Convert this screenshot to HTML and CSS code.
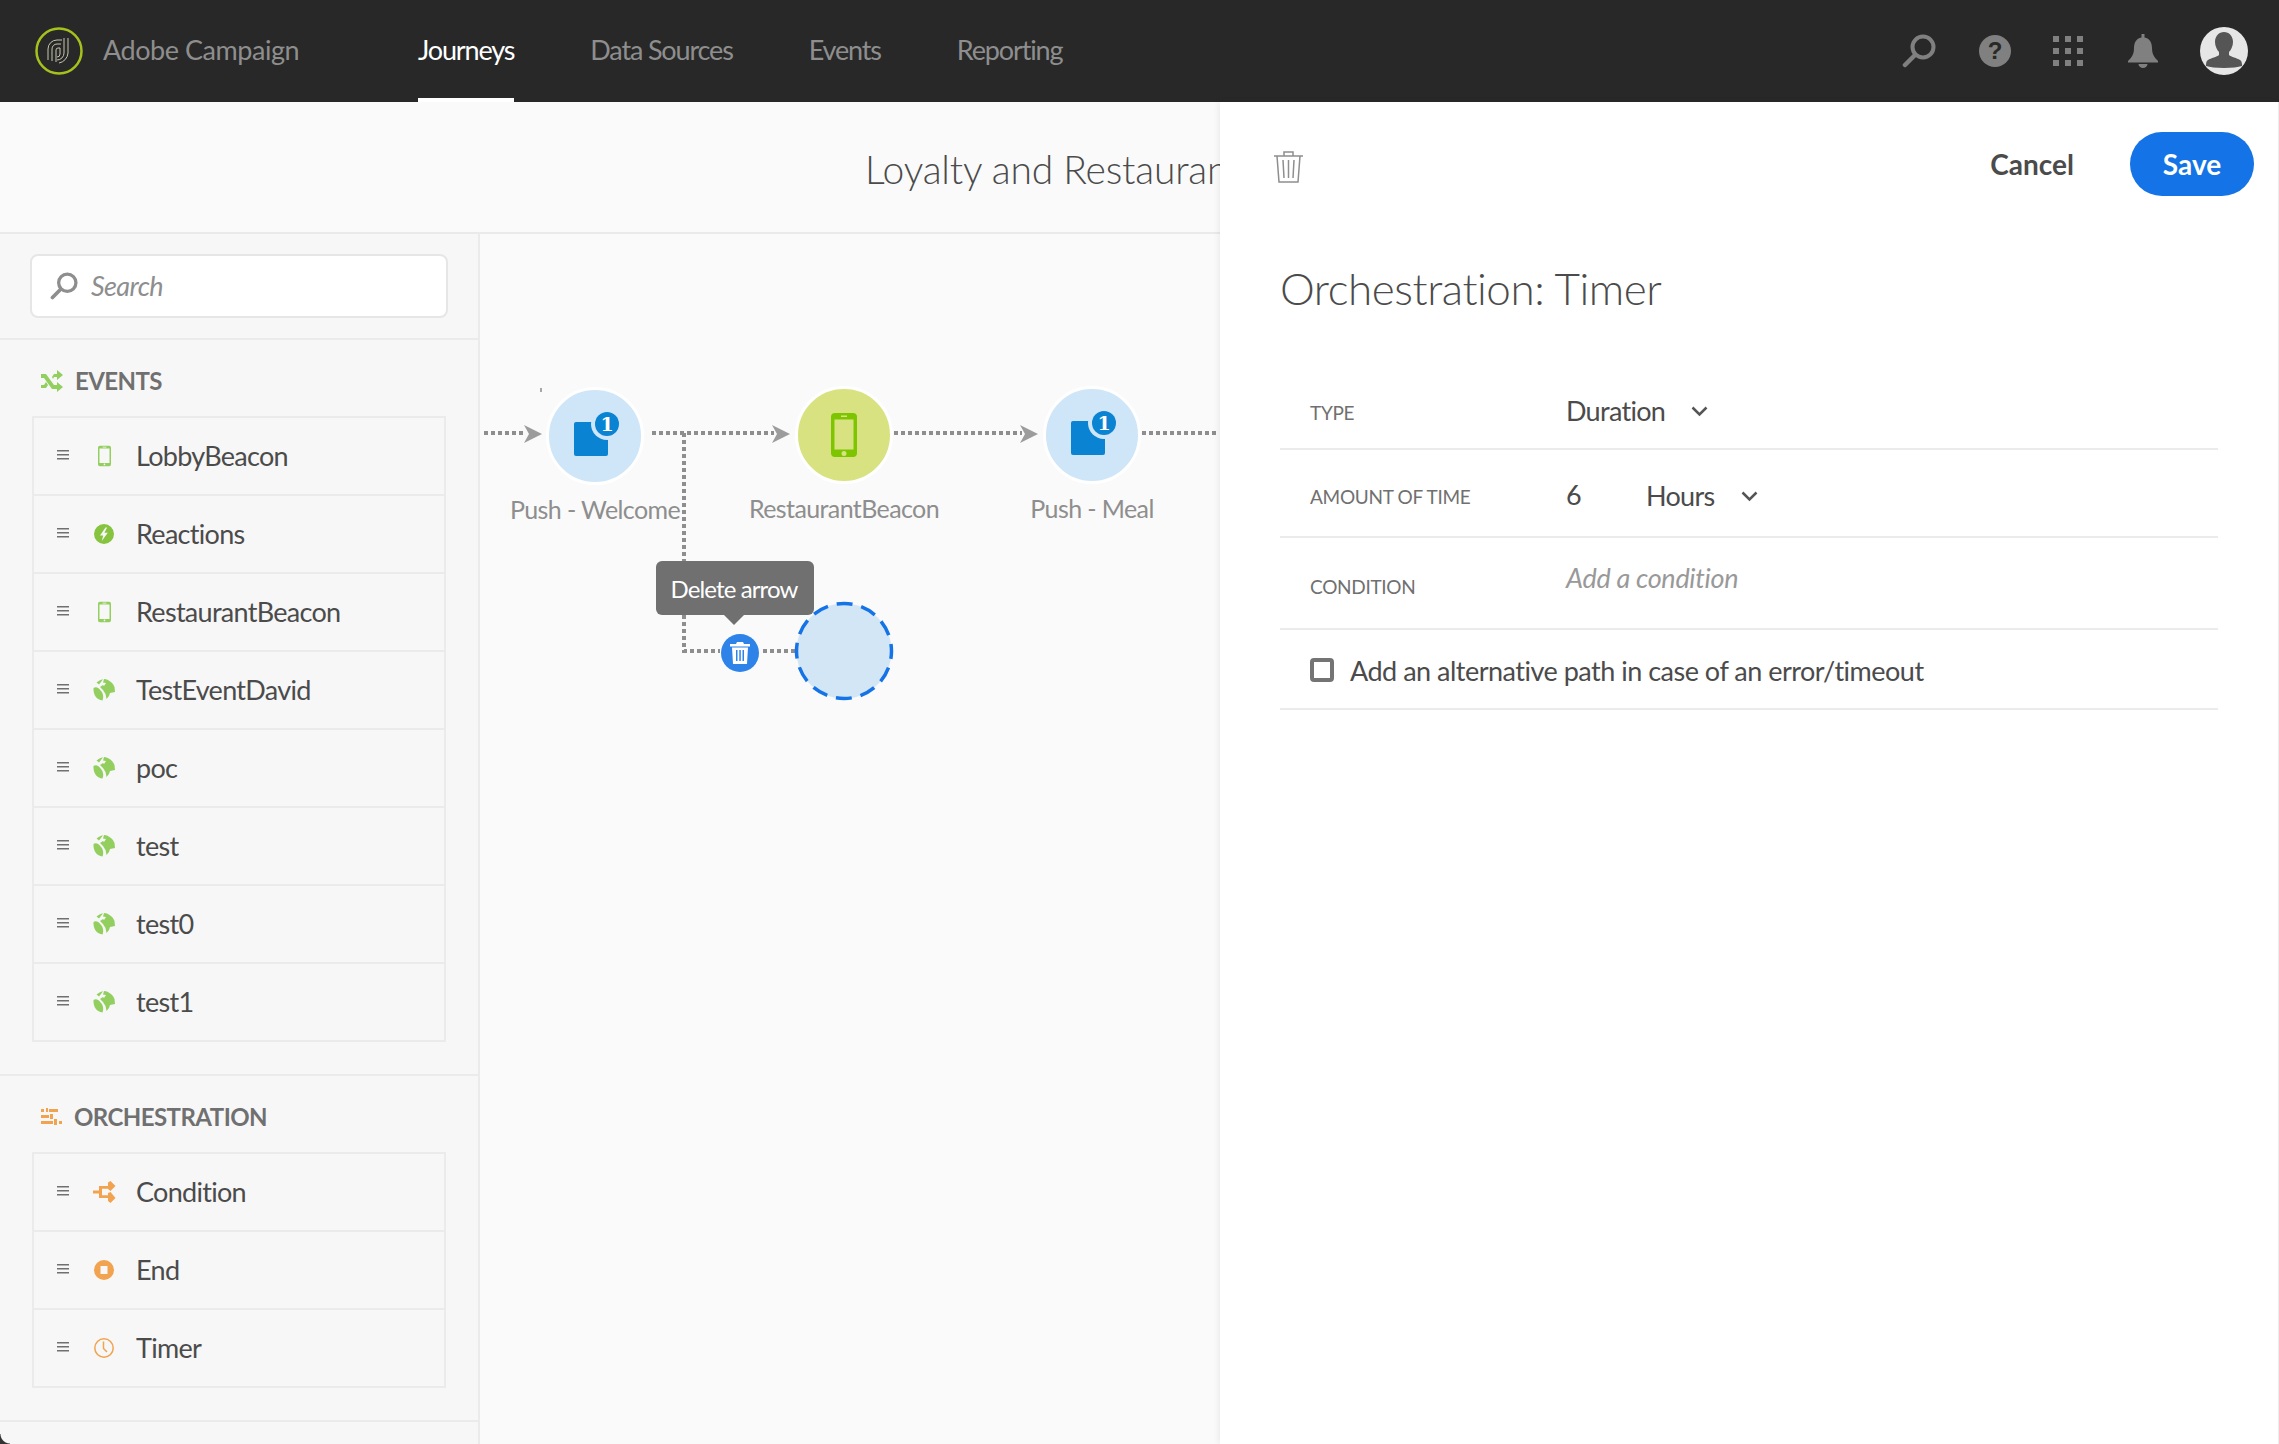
FILE: index.html
```html
<!DOCTYPE html>
<html lang="en">
<head>
<meta charset="utf-8">
<title>Adobe Campaign</title>
<link rel="stylesheet" href="styles.css">
</head>
<body>
<svg class="defs" width="0" height="0" aria-hidden="true">
  <symbol id="i-phone" viewBox="0 0 14 22"><path fill="currentColor" fill-rule="evenodd" d="M2 0h10a2 2 0 0 1 2 2v18a2 2 0 0 1-2 2H2a2 2 0 0 1-2-2V2a2 2 0 0 1 2-2zM1.600 3v15.500h10.800V3zM5 1v.8h4V1zM7 19.200a.9.9 0 1 0 0 1.800.9.9 0 0 0 0-1.800z"/></symbol>
  <symbol id="i-bolt" viewBox="0 0 20 20"><path fill="currentColor" fill-rule="evenodd" d="M10 0a10 10 0 1 1 0 20 10 10 0 0 1 0-20zM11.500 3.500 6 11.500h3.200L7.800 17l6-8.300h-3.400l2.700-5.200z"/></symbol>
  <symbol id="i-globe" viewBox="0 0 22 22"><path fill="currentColor" d="M.5 9C3 7 6 9 8 12c2 2 3 6 1.500 9.500C4 21 0 16 .5 9zM3.500 3.500C5.500 2 7.500.8 10 .2L8 3 6 5.500zM11 .1c5 .4 9 4 10.500 8L22 13l-5 1-1 3-2.500 3-1-5L10 11 7 8l3-2 1 1 2-3-3-.5z"/></symbol>
  <symbol id="i-handle" viewBox="0 0 12 10"><path fill="#707070" d="M0 0h12v1.600H0zM0 4h12v1.600H0zM0 8h12v1.600H0z"/></symbol>
</svg>

<header class="topbar">
  <svg class="logo" viewBox="0 0 48 48" width="48" height="48">
    <circle cx="24" cy="24" r="22.500" fill="none" stroke="#a4c11e" stroke-width="2.500"/>
    <g fill="none" stroke="#c6c6ac" stroke-width="1">
      <path d="M13 33V22a9 9 0 0 1 9-9h5"/>
      <path d="M17 34V22a5 5 0 0 1 5-5h4"/>
      <path d="M21 35V23a2 2 0 0 1 2-2h2v6a3 3 0 0 1-3 3"/>
      <path d="M29 11v15a7 7 0 0 1-7 7"/>
      <path d="M33 11v15a11 11 0 0 1-9 10"/>
    </g>
  </svg>
  <span class="brand">Adobe Campaign</span>
  <nav class="nav">
    <a class="nav-item is-active">Journeys</a>
    <a class="nav-item">Data Sources</a>
    <a class="nav-item">Events</a>
    <a class="nav-item">Reporting</a>
  </nav>
  <div class="top-icons">
    <svg class="ti-search" width="34" height="34" viewBox="0 0 34 34"><circle cx="21" cy="13" r="10.500" fill="none" stroke="#808080" stroke-width="4"/><path d="M13 21 3 31" stroke="#808080" stroke-width="4.500" stroke-linecap="round"/></svg>
    <svg class="ti-help" width="32" height="32" viewBox="0 0 32 32"><circle cx="16" cy="16" r="16" fill="#808080"/><text x="16" y="24" class="help-q">?</text></svg>
    <svg class="ti-grid" width="30" height="30" viewBox="0 0 30 30"><path fill="#808080" d="M0 0h6v6H0zM12 0h6v6h-6zM24 0h6v6h-6zM0 12h6v6H0zM12 12h6v6h-6zM24 12h6v6h-6zM0 24h6v6H0zM12 24h6v6h-6zM24 24h6v6h-6z"/></svg>
    <svg class="ti-bell" width="30" height="34" viewBox="0 0 30 34"><path fill="#808080" d="M13.500 0h3v3.500C22 4.500 24 9 24 14c0 6 2 9 6 13v1.500H0V27c4-4 6-7 6-13 0-5 2-9.500 7.500-10.500zM10.500 30h9a4.500 4 0 0 1-9 0z"/></svg>
    <svg class="ti-avatar" width="48" height="48" viewBox="0 0 48 48"><circle cx="24" cy="24" r="24" fill="#e6e6e6"/><path fill="#555" d="M24 5c5 0 9 4 9 10 0 4-2 8-4 10v3c2 2 8 3 11 5 2 1 2 4 2 6-4 1-10 2-18 2s-14-1-18-2c0-2 0-5 2-6 3-2 9-3 11-5v-3c-2-2-4-6-4-10 0-6 4-10 9-10z"/></svg>
  </div>
</header>

<main class="workspace">
  <section class="journey">
    <div class="journey-title"><h1>Loyalty and Restaurant Journey</h1></div>
    <div class="journey-body">
      <aside class="sidebar">
        <div class="search-wrap">
          <div class="search">
            <svg width="28" height="28" viewBox="0 0 34 34"><circle cx="21" cy="13" r="10.500" fill="none" stroke="#8e8e8e" stroke-width="4"/><path d="M13 21 3 31" stroke="#8e8e8e" stroke-width="4.500" stroke-linecap="round"/></svg>
            <span class="search-text">Search</span>
          </div>
        </div>

        <section class="group">
          <h2 class="group-title">
            <svg class="green" width="22" height="22" viewBox="0 0 22 22"><path fill="currentColor" d="M0 4h5l8 11h3v-3l6 5-6 5v-3h-5L3 8H0zM0 15h3l2-3 2 3-2 3H0zM11 7l2-3h3V0l6 5-6 5V7h-3l-1 2z"/></svg>
            EVENTS
          </h2>
          <ul class="list">
            <li class="row"><svg class="handle"><use href="#i-handle"/></svg><span class="row-icon green"><svg width="13" height="22"><use href="#i-phone"/></svg></span><span class="row-text">LobbyBeacon</span></li>
            <li class="row"><svg class="handle"><use href="#i-handle"/></svg><span class="row-icon green-strong"><svg width="20" height="20"><use href="#i-bolt"/></svg></span><span class="row-text">Reactions</span></li>
            <li class="row"><svg class="handle"><use href="#i-handle"/></svg><span class="row-icon green"><svg width="13" height="22"><use href="#i-phone"/></svg></span><span class="row-text">RestaurantBeacon</span></li>
            <li class="row"><svg class="handle"><use href="#i-handle"/></svg><span class="row-icon green"><svg width="22" height="22"><use href="#i-globe"/></svg></span><span class="row-text">TestEventDavid</span></li>
            <li class="row"><svg class="handle"><use href="#i-handle"/></svg><span class="row-icon green"><svg width="22" height="22"><use href="#i-globe"/></svg></span><span class="row-text">poc</span></li>
            <li class="row"><svg class="handle"><use href="#i-handle"/></svg><span class="row-icon green"><svg width="22" height="22"><use href="#i-globe"/></svg></span><span class="row-text">test</span></li>
            <li class="row"><svg class="handle"><use href="#i-handle"/></svg><span class="row-icon green"><svg width="22" height="22"><use href="#i-globe"/></svg></span><span class="row-text">test0</span></li>
            <li class="row"><svg class="handle"><use href="#i-handle"/></svg><span class="row-icon green"><svg width="22" height="22"><use href="#i-globe"/></svg></span><span class="row-text">test1</span></li>
          </ul>
        </section>

        <section class="group group-orch">
          <h2 class="group-title">
            <svg class="orange" width="21" height="17" viewBox="0 0 21 17"><path fill="currentColor" d="M0 1h3v3H0zM5 0h2v4H5zM8 1h9v3H8zM0 7h8v3H0zM9 6h3v5H9zM0 13h12v3H0zM13 11h3v6h-3zM18 13h3v3h-3z"/></svg>
            ORCHESTRATION
          </h2>
          <ul class="list">
            <li class="row"><svg class="handle"><use href="#i-handle"/></svg><span class="row-icon orange"><svg width="23" height="22" viewBox="0 0 23 22"><path fill="currentColor" d="M0 9.500h6V5h9V1.500L17.500 0l5 5-5 5-2.500-2v-.2h-6v6.400h6V12l2.500-1 5 6-5 5-2.500-2v-3H6v-4.500H0z"/></svg></span><span class="row-text">Condition</span></li>
            <li class="row"><svg class="handle"><use href="#i-handle"/></svg><span class="row-icon orange"><svg width="20" height="20" viewBox="0 0 20 20"><path fill="currentColor" fill-rule="evenodd" d="M10 0a10 10 0 1 1 0 20 10 10 0 0 1 0-20zM6.500 6v8h7V6z"/></svg></span><span class="row-text">End</span></li>
            <li class="row"><svg class="handle"><use href="#i-handle"/></svg><span class="row-icon orange"><svg width="20" height="20" viewBox="0 0 20 20"><circle cx="10" cy="10" r="9.200" fill="none" stroke="currentColor" stroke-width="1.500"/><path d="M9.500 3.500v7l3.500 3.500" fill="none" stroke="currentColor" stroke-width="1.500"/></svg></span><span class="row-text">Timer</span></li>
          </ul>
        </section>
      </aside>

      <div class="canvas">
        <svg class="links" width="740" height="560" viewBox="480 234 740 560">
          <g fill="none" stroke="#8e8e8e" stroke-width="4" stroke-dasharray="4 3">
            <path d="M484 433H526"/>
            <path d="M652 433H774"/>
            <path d="M894 433H1022"/>
            <path d="M1142 433H1218"/>
            <path d="M684 433V561"/>
            <path d="M684 615V651H720"/>
            <path d="M763 651H795"/>
          </g>
          <g fill="#9c9c9c">
            <path d="M524 425 542 434 524 443 529 434z"/>
            <path d="M772 425 790 434 772 443 777 434z"/>
            <path d="M1020 425 1038 434 1020 443 1025 434z"/>
          </g>
          <path d="M541 388v4" stroke="#555" stroke-width="1"/>
        </svg>

        <div class="node node-welcome">
          <div class="bubble bubble-blue">
            <svg width="48" height="46" viewBox="0 0 48 46"><path fill="#0a84d2" d="M2 10h30a2 2 0 0 1 2 2v30a2 2 0 0 1-2 2H2a2 2 0 0 1-2-2V12a2 2 0 0 1 2-2z"/><circle cx="33" cy="12" r="16" fill="#cfe5f8"/><circle cx="33" cy="12" r="12" fill="#0a84d2"/><text x="33" y="18.500" class="badge-num">1</text></svg>
          </div>
          <span class="node-label">Push - Welcome</span>
        </div>
        <div class="node node-beacon">
          <div class="bubble bubble-green">
            <svg width="26" height="44" viewBox="0 0 26 44"><path fill="#7dc500" fill-rule="evenodd" d="M4 0h18a4 4 0 0 1 4 4v36a4 4 0 0 1-4 4H4a4 4 0 0 1-4-4V4a4 4 0 0 1 4-4zM3.500 6.500v30h19v-30zM10 2.500v1.500h6V2.500zM13 38a2.500 2.500 0 1 0 0 5 2.500 2.500 0 0 0 0-5z"/></svg>
          </div>
          <span class="node-label">RestaurantBeacon</span>
        </div>
        <div class="node node-meal">
          <div class="bubble bubble-blue">
            <svg width="48" height="46" viewBox="0 0 48 46"><path fill="#0a84d2" d="M2 10h30a2 2 0 0 1 2 2v30a2 2 0 0 1-2 2H2a2 2 0 0 1-2-2V12a2 2 0 0 1 2-2z"/><circle cx="33" cy="12" r="16" fill="#cfe5f8"/><circle cx="33" cy="12" r="12" fill="#0a84d2"/><text x="33" y="18.500" class="badge-num">1</text></svg>
          </div>
          <span class="node-label">Push - Meal</span>
        </div>

        <svg class="placeholder" width="100" height="100" viewBox="0 0 100 100"><circle cx="50" cy="50" r="47.500" fill="#d3e6f6" stroke="#1473e6" stroke-width="3.500" stroke-dasharray="15.900 9" stroke-dashoffset="8"/></svg>
        <button class="arrow-delete" type="button">
          <svg width="20" height="22" viewBox="0 0 20 22"><path fill="#fff" fill-rule="evenodd" d="M7 0h6l1 2h6v2.500H0V2h6zM2 5.500h16L17 22H3zM6 8v11h1.500V8zM9.300 8v11h1.500V8zM12.500 8v11H14V8z"/></svg>
        </button>
        <div class="tooltip">Delete arrow</div>
      </div>
    </div>
  </section>

  <section class="panel">
    <div class="panel-head">
      <svg class="panel-trash" width="29" height="32" viewBox="0 0 29 32"><g fill="none" stroke="#8e8e8e" stroke-width="1.500"><path d="M0 5h29M10 5V1h9v4M3 5l2 26h19l2-26M9 9l1 18M14.500 9v18M20 9l-1 18"/></g></svg>
      <div class="panel-actions">
        <button class="btn-cancel" type="button">Cancel</button>
        <button class="btn-save" type="button">Save</button>
      </div>
    </div>
    <h2 class="panel-title">Orchestration: Timer</h2>
    <div class="field field-type">
      <span class="field-label">TYPE</span>
      <span class="field-value">Duration<svg class="chev" width="17" height="11" viewBox="0 0 17 11"><path d="M1.500 1.500 8.500 8.500l7-7" fill="none" stroke="#555" stroke-width="2.500"/></svg></span>
    </div>
    <div class="field field-amount">
      <span class="field-label">AMOUNT OF TIME</span>
      <span class="field-value"><span class="amount-num">6</span>Hours<svg class="chev" width="17" height="11" viewBox="0 0 17 11"><path d="M1.500 1.500 8.500 8.500l7-7" fill="none" stroke="#555" stroke-width="2.500"/></svg></span>
    </div>
    <div class="field field-cond">
      <span class="field-label">CONDITION</span>
      <span class="field-value is-placeholder">Add a condition</span>
    </div>
    <label class="field field-check">
      <span class="checkbox"></span>
      <span>Add an alternative path in case of an error/timeout</span>
    </label>
  </section>
</main>
<div class="window-corner"></div>
</body>
</html>
```
FILE: styles.css
```css
* { box-sizing: border-box; }
html, body { margin: 0; height: 100%; }
body {
  width: 2279px; height: 1444px; overflow: hidden;
  display: flex; flex-direction: column;
  font-family: "Lato", "Open Sans", sans-serif;
  color: #4b4b4b; background: #fff;
}
.defs { position: absolute; }
ul { list-style: none; margin: 0; padding: 0; }
h1, h2 { margin: 0; font-weight: 400; }
svg { display: block; flex: none; }
.window-corner {
  position: absolute; left: 0; bottom: 0; width: 10px; height: 10px;
  background: radial-gradient(circle at 100% 0, transparent 9px, #333 10px);
}

.topbar {
  height: 102px; flex: none; background: #282828;
  display: flex; align-items: center; padding-left: 35px;
}
.brand { margin-left: 20px; font-size: 27px; letter-spacing: -.45px; color: #8e8e8e; width: 315px; padding-bottom: 3px; }
.nav { display: flex; height: 100%; gap: 76px; }
.nav-item {
  display: flex; align-items: center; height: 100%;
  font-size: 27px; letter-spacing: -1.15px; color: #8e8e8e;
  border-bottom: 4px solid transparent; padding-top: 0;
}
.nav-item.is-active { color: #fff; border-bottom-color: #fff; }
.top-icons { margin-left: auto; display: flex; align-items: center; padding-right: 31px; gap: 42px; }
.ti-search { margin-right: 1px; }
.ti-grid { margin-right: 3px; }
.help-q { font: 700 24px "Liberation Sans", sans-serif; fill: #282828; text-anchor: middle; }

.workspace { flex: 1; display: flex; min-height: 0; }
.journey { width: 1220px; flex: none; display: flex; flex-direction: column; overflow: hidden; background: #fafafa; }
.journey-title {
  height: 132px; flex: none; padding-left: 865px; display: flex; align-items: center;
  border-bottom: 2px solid #eaeaea; white-space: nowrap;
}
.journey-title h1 { font-size: 39px; font-weight: 300; letter-spacing: -.2px; color: #4b4b4b; padding-top: 4px; }
.journey-body { flex: 1; display: flex; min-height: 0; }

.sidebar { width: 480px; flex: none; background: #f7f7f7; border-right: 2px solid #ebebeb; }
.search-wrap { padding: 20px 30px; border-bottom: 2px solid #ebebeb; }
.search {
  height: 64px; width: 418px; background: #fff; border: 2px solid #e6e6e6; border-radius: 8px;
  display: flex; align-items: center; padding-left: 18px; gap: 13px;
  font-size: 27px; letter-spacing: -.6px; font-style: italic; color: #8e8e8e;
}
.search-text { padding-bottom: 2px; }
.group { padding: 0 32px 32px; border-bottom: 2px solid #ebebeb; }
.group-title {
  height: 76px; padding: 5px 0 0 9px; display: flex; align-items: center; gap: 12px;
  font-size: 24px; letter-spacing: -.55px; font-weight: 700; color: #707070;
}
.list { width: 414px; border: 2px solid #ebebeb; }
.row {
  height: 78px; display: flex; align-items: center; padding-left: 23px;
  font-size: 27px; letter-spacing: -.7px; color: #4b4b4b; border-bottom: 2px solid #ebebeb;
}
.row:last-child { height: 76px; border-bottom: 0; }
.row-text { padding-bottom: 2px; }
.handle { width: 12px; height: 10px; margin-top: -3px; }
.row-icon { width: 67px; padding-left: 15px; padding-right: 12px; display: flex; justify-content: center; }
.green { color: #93cf5f; }
.green-strong { color: #86c440; }
.orange { color: #f2a34f; }

.canvas { flex: 1; position: relative; background: #fafafa; }
.links { position: absolute; left: 0; top: 0; }
.node { position: absolute; width: 220px; display: flex; flex-direction: column; align-items: center; }
.node-welcome { left: 5px; top: 153px; }
.node-beacon { left: 254px; top: 152px; }
.node-meal { left: 502px; top: 152px; }
.bubble {
  width: 98px; height: 98px; border-radius: 50%; border: 3px solid #fff;
  display: flex; align-items: center; justify-content: center;
}
.bubble-blue { background: #cfe5f8; }
.bubble-green { background: #d9e281; }
.bubble-blue svg { transform: translate(3px, -1px); }
.badge-num { font: 700 19px "DejaVu Serif", serif; fill: #fff; text-anchor: middle; }
.node-label { margin-top: 9px; font-size: 25px; letter-spacing: -.6px; color: #8e8e8e; white-space: nowrap; }

.placeholder { position: absolute; left: 314px; top: 367px; }
.arrow-delete {
  position: absolute; left: 241px; top: 400px; width: 38px; height: 38px; padding: 0; border: 0; border-radius: 50%;
  background: #2d83e8; display: flex; align-items: center; justify-content: center;
}
.tooltip {
  position: absolute; left: 176px; top: 327px; width: 158px; height: 54px; border-radius: 6px;
  background: #707070; color: #fff; font-size: 24px; letter-spacing: -.9px; padding-right: 2px;
  display: flex; align-items: center; justify-content: center;
}
.tooltip::after {
  content: ""; position: absolute; left: 68px; top: 54px;
  border: 10px solid transparent; border-top-color: #707070; border-bottom: 0;
}

.panel { flex: 1; min-width: 0; background: #fff; border-right: 1px solid #ececec; box-shadow: -2px 0 6px rgba(0,0,0,.06); position: relative; padding: 0 60px; }
.panel-head { display: flex; justify-content: space-between; align-items: center; padding-top: 30px; margin: 0 -36px 0 -6px; height: 94px; }
.panel-trash { margin-top: 6px; }
.panel-actions { display: flex; align-items: center; gap: 56px; }
.btn-cancel { background: none; border: 0; padding: 0; font: 700 28px "Lato", sans-serif; color: #4b4b4b; }
.btn-save { width: 124px; height: 64px; border: 0; border-radius: 32px; background: #1473e6; color: #fff; font: 700 28px "Lato", sans-serif; }
.panel-title { margin-top: 64px; font-size: 44px; letter-spacing: -.45px; font-weight: 300; line-height: 56px; color: #4b4b4b; }

.field { display: flex; align-items: flex-start; border-bottom: 2px solid #ebebeb; padding-left: 30px; }
.field-label { width: 256px; flex: none; font-size: 19px; letter-spacing: -.3px; line-height: 32px; color: #707070; }
.field-value { display: flex; align-items: center; font-size: 27px; letter-spacing: -.7px; line-height: 32px; color: #4b4b4b; }
.chev { margin-left: 26px; }
.amount-num { width: 80px; margin-top: -2px; }
.is-placeholder { font-style: italic; letter-spacing: -.3px; color: #999; }
.field-type { margin-top: 41px; height: 93px; padding-top: 40px; }
.field-type .field-value { margin-top: -2px; }
.field-amount { height: 88px; padding-top: 31px; }
.field-amount .field-value { margin-top: -1px; }
.field-cond { height: 92px; padding-top: 24px; }
.field-cond .field-label { margin-top: 9px; }
.field-check { height: 80px; padding-top: 25px; gap: 16px; font-size: 27px; letter-spacing: -.5px; line-height: 32px; color: #4b4b4b; }
.checkbox { width: 24px; height: 24px; margin-top: 3px; border: 4px solid #747474; border-radius: 4px; flex: none; }
```
